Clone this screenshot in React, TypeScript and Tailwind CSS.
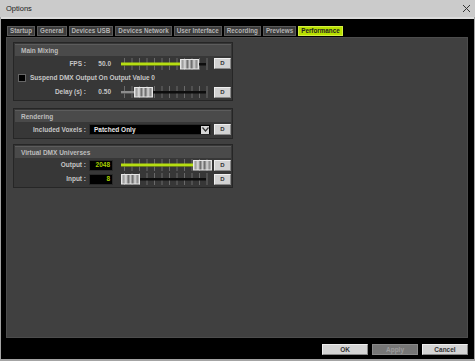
import React from "react";

const LIME = "#b6de12";

function Slider({ fill = 0, thumb, grayLeft = 0, uid }: { fill?: number; thumb: number; grayLeft?: number; uid: string }) {
  return (
    <svg width="92" height="12" viewBox="0 0 92 12" className="block">
      <defs>
        <linearGradient id={`g-${uid}`} x1="0" x2="1" y1="0" y2="0">
          <stop offset="0" stopColor="#d8d8d8" />
          <stop offset="0.12" stopColor="#9a9a9a" />
          <stop offset="0.25" stopColor="#e0e0e0" />
          <stop offset="0.38" stopColor="#6a6a6a" />
          <stop offset="0.5" stopColor="#c8c8c8" />
          <stop offset="0.62" stopColor="#6a6a6a" />
          <stop offset="0.75" stopColor="#d8d8d8" />
          <stop offset="0.88" stopColor="#8a8a8a" />
          <stop offset="1" stopColor="#cfcfcf" />
        </linearGradient>
      </defs>
      {Array.from({ length: 12 }).map((_, i) => (
        <line key={i} x1={3.5 + i * 7.5} x2={3.5 + i * 7.5} y1="0" y2="12" stroke="#6a6a6a" strokeWidth="1" />
      ))}
      <rect x="0" y="5" width="85" height="2.5" fill="#0d0d0d" />
      {grayLeft > 0 ? <rect x="0" y="5" width={grayLeft} height="2.5" fill="#8c8c8c" /> : null}
      {fill > 0 ? <rect x="0" y="4.5" width={fill} height="3" fill={LIME} /> : null}
      <rect x={thumb + 0.5} y="1.5" width="18" height="9.5" fill={`url(#g-${uid})`} stroke="#e6e6e6" strokeWidth="1" />
    </svg>
  );
}

function DButton() {
  return (
    <div className="w-[17px] h-[11px] bg-[#d2d2d2] border border-[#f0f0f0] border-b-[#8a8a8a] border-r-[#8a8a8a] flex items-center justify-center text-[6px] font-bold text-[#333]">
      D
    </div>
  );
}

function Group({ title, children }: { title: string; children: React.ReactNode }) {
  return (
    <div className="w-[220px] bg-[#373737] border border-[#262626] p-[1px] flex flex-col">
      <div className="h-[12px] bg-[#4a4a4a] border-t border-[#5c5c5c] flex items-center pl-[6px] text-[6.5px] font-bold text-[#bdbdbd]">
        {title}
      </div>
      {children}
    </div>
  );
}

function Label({ text }: { text: string }) {
  return <div className="w-[71px] text-right text-[6.5px] font-bold text-[#c6c6c6] whitespace-nowrap">{text}</div>;
}

const tabs = ["Startup", "General", "Devices USB", "Devices Network", "User Interface", "Recording", "Previews"];

export default function App() {
  return (
    <div className="w-[475px] h-[361px] bg-[#a4a4a4] flex flex-col font-['Liberation_Sans',Arial,sans-serif] overflow-hidden">
      <div className="h-[17px] bg-[#cbcbcb] flex items-center justify-between pl-[6px] pr-[4px] shrink-0">
        <span className="text-[7.5px] text-[#1a1a1a]">Options</span>
        <svg width="9" height="9" viewBox="0 0 9 9">
          <path d="M1 1 L8 8 M8 1 L1 8" stroke="#333" strokeWidth="1" />
        </svg>
      </div>
      <div className="h-[2px] bg-[#dcdcdc] mx-[1px] shrink-0" />
      <div className="flex-1 mx-[1px] mb-[2px] bg-black flex flex-col">
        <div className="flex gap-[2px] pl-[6px] pt-[7px] h-[18px] shrink-0">
          {tabs.map((t) => (
            <div key={t} className="h-[10px] px-[2px] bg-[#3c3c3c] border border-[#5a5a5a] flex items-center text-[6.3px] font-bold text-[#b4b4b4] whitespace-nowrap">
              {t}
            </div>
          ))}
          <div className="h-[10px] px-[2px] bg-[#b8e000] border border-[#d4f040] flex items-center text-[6.3px] font-bold text-[#222] whitespace-nowrap">
            Performance
          </div>
        </div>
        <div className="ml-[5px] w-[462px] h-[301px] bg-[#404040] border border-[#4c4c4c] shrink-0 pl-[6px] pt-[4px] flex flex-col">
          <Group title="Main Mixing">
            <div className="flex items-center h-[15px]">
              <Label text="FPS :" />
              <div className="w-[24px] ml-[3px] pr-[2px] text-right text-[6.5px] font-bold text-[#c6c6c6]">50.0</div>
              <div className="ml-[8px]"><Slider uid="fps" fill={60} thumb={59} /></div>
              <div className="ml-[1px]"><DButton /></div>
            </div>
            <div className="flex items-center h-[14px] pl-[3px]">
              <div className="w-[8px] h-[8px] bg-black border border-[#666]" />
              <span className="ml-[4px] text-[6.5px] font-bold text-[#c6c6c6] whitespace-nowrap">Suspend DMX Output On Output Value 0</span>
            </div>
            <div className="flex items-center h-[14px]">
              <Label text="Delay (s) :" />
              <div className="w-[24px] ml-[3px] pr-[2px] text-right text-[6.5px] font-bold text-[#c6c6c6]">0.50</div>
              <div className="ml-[8px]"><Slider uid="delay" grayLeft={13} thumb={13} /></div>
              <div className="ml-[1px]"><DButton /></div>
            </div>
          </Group>
          <div className="h-[7px]" />
          <Group title="Rendering">
            <div className="flex items-center h-[15px]">
              <Label text="Included Voxels :" />
              <div className="ml-[3px] w-[122px] h-[11px] bg-black border border-[#2a2a2a] flex items-center justify-between pl-[4px] pr-[1px]">
                <span className="text-[6.5px] font-bold text-[#e6e6e6]">Patched Only</span>
                <div className="w-[8px] h-[8px] bg-[#d6d6d6] flex items-center justify-center">
                  <svg width="7" height="5" viewBox="0 0 7 5">
                    <path d="M0.5 0.5 L3.5 4 L6.5 0.5" fill="none" stroke="#333" strokeWidth="1.2" />
                  </svg>
                </div>
              </div>
              <div className="ml-[3px]"><DButton /></div>
            </div>
          </Group>
          <div className="h-[5px]" />
          <Group title="Virtual DMX Universes">
            <div className="flex items-center h-[14px]">
              <Label text="Output :" />
              <div className="w-[24px] h-[11px] ml-[3px] pr-[2px] bg-black border border-[#2a2a2a] flex items-center justify-end text-[6.5px] font-bold text-[#a8d000]">2048</div>
              <div className="ml-[8px]"><Slider uid="out" fill={72} thumb={72} /></div>
              <div className="ml-[1px]"><DButton /></div>
            </div>
            <div className="flex items-center h-[14px]">
              <Label text="Input :" />
              <div className="w-[24px] h-[11px] ml-[3px] pr-[2px] bg-black border border-[#2a2a2a] flex items-center justify-end text-[6.5px] font-bold text-[#a8d000]">8</div>
              <div className="ml-[8px]"><Slider uid="in" thumb={0} /></div>
              <div className="ml-[1px]"><DButton /></div>
            </div>
          </Group>
        </div>
        <div className="flex justify-end gap-[4px] pr-[6px] mt-[6px]">
          <div className="w-[46px] h-[11px] bg-[#d4d4d4] border border-[#eeeeee] border-b-[#888] border-r-[#888] flex items-center justify-center text-[6.5px] font-bold text-[#333]">OK</div>
          <div className="w-[46px] h-[11px] bg-[#767676] border border-[#8a8a8a] flex items-center justify-center text-[6.5px] font-bold text-[#9c9c9c]">Apply</div>
          <div className="w-[46px] h-[11px] bg-[#d4d4d4] border border-[#eeeeee] border-b-[#888] border-r-[#888] flex items-center justify-center text-[6.5px] font-bold text-[#333]">Cancel</div>
        </div>
      </div>
    </div>
  );
}
